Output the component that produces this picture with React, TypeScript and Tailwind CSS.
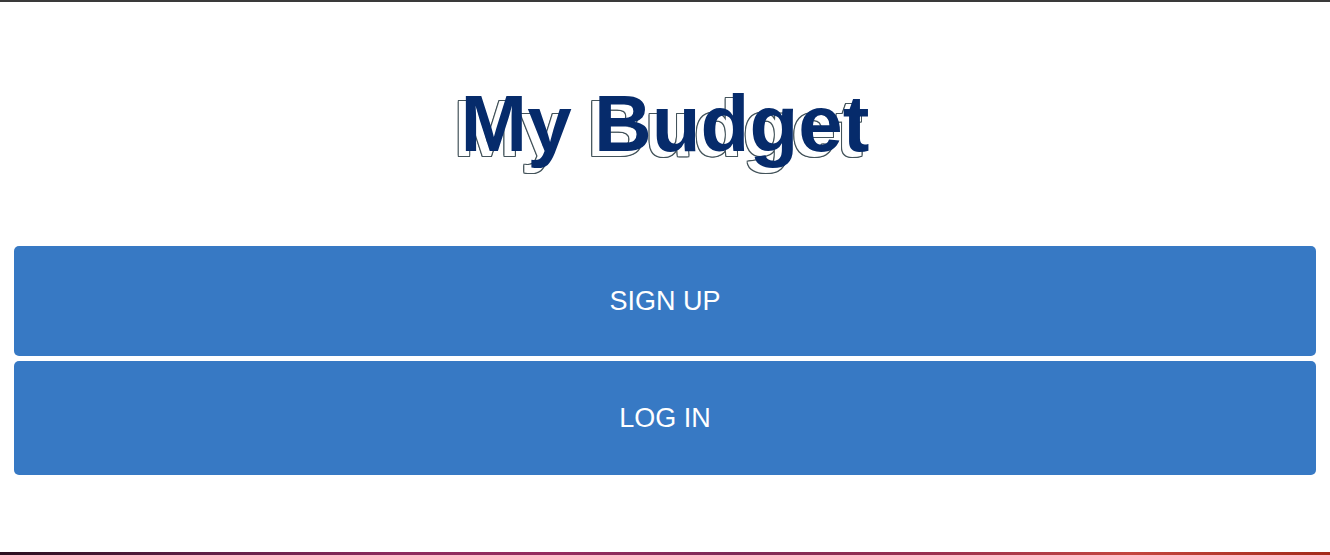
export default function App() {
  return (
    <main className="h-[555px] w-full bg-white flex flex-col font-['Liberation_Sans',Arial,sans-serif] overflow-hidden">
      {/* top window edge */}
      <div className="h-[2px] bg-[#3a3a3a]" />

      {/* Title */}
      <div className="flex justify-center pt-[82px]">
        <h1 className="text-[80px] leading-[80px] font-bold text-[#062b6b] [text-shadow:-7px_5px_0_#fff,-8px_5px_0_#44545b,-6px_5px_0_#44545b,-7px_4px_0_#44545b,-7px_6px_0_#44545b,-8px_6px_0_#44545b,-6px_4px_0_#44545b,-8px_4px_0_#44545b,-6px_6px_0_#44545b]">
          My Budget
        </h1>
      </div>

      {/* Actions */}
      <div className="flex flex-col gap-[5px] px-[14px] mt-[82px]">
        <button className="h-[110px] rounded-[5px] bg-[#3779c4] text-white text-[27px] uppercase">
          Sign Up
        </button>
        <button className="h-[114px] rounded-[5px] bg-[#3779c4] text-white text-[27px] uppercase">
          Log In
        </button>
      </div>

      <div className="flex-1" />

      {/* desktop strip below the window */}
      <div className="h-[3px] bg-[linear-gradient(90deg,#2a0f1f_0%,#5e1f45_15%,#8e2b5e_30%,#962c5f_42%,#7e2a57_55%,#9a3050_70%,#c4463f_85%,#a32a1a_100%)]" />
    </main>
  )
}
